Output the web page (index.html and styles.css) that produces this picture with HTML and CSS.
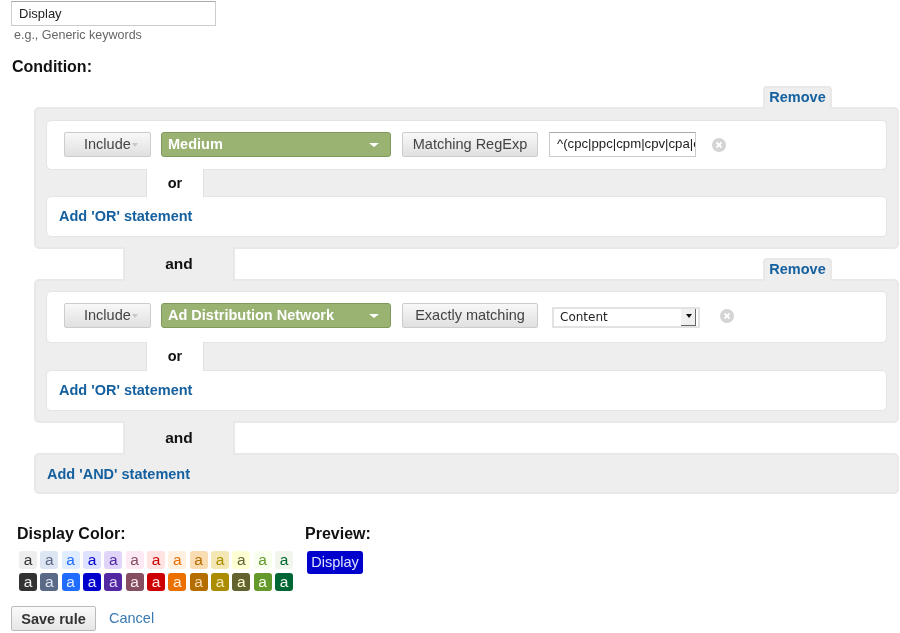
FILE: index.html
```html
<!DOCTYPE html>
<html lang="en">
<head>
<meta charset="utf-8">
<title>Rule</title>
<link rel="stylesheet" href="styles.css">
</head>
<body>
<main class="page">
  <input class="name" type="text" value="Display">
  <p class="hint">e.g., Generic keywords</p>
  <h2 class="condition">Condition:</h2>

  <div class="builder">
    <section class="group">
      <a class="tab">Remove</a>
      <div class="card card-row card-first">
        <button class="btn include">Include<span class="caret"></span></button>
        <div class="dim">Medium<span class="dim-caret"></span></div>
        <button class="btn match">Matching RegExp</button>
        <input class="regexp" type="text" value="^(cpc|ppc|cpm|cpv|cpa|content)$">
        <svg class="close" width="14" height="14" viewBox="0 0 14 14"><circle cx="7" cy="7" r="7" fill="#d4d4d4"/><path d="M4.5 4.5l5 5M9.5 4.5l-5 5" stroke="#fff" stroke-width="1.8"/></svg>
      </div>
      <div class="or"><b>or</b></div>
      <div class="card card-add"><a class="link">Add 'OR' statement</a></div>
    </section>

    <div class="and"><b>and</b></div>

    <section class="group group-second">
      <a class="tab">Remove</a>
      <div class="card card-row card-second">
        <button class="btn include">Include<span class="caret"></span></button>
        <div class="dim">Ad Distribution Network<span class="dim-caret"></span></div>
        <button class="btn match">Exactly matching</button>
        <div class="select">Content<span class="arrow"></span></div>
        <svg class="close close-second" width="14" height="14" viewBox="0 0 14 14"><circle cx="7" cy="7" r="7" fill="#d4d4d4"/><path d="M4.5 4.5l5 5M9.5 4.5l-5 5" stroke="#fff" stroke-width="1.8"/></svg>
      </div>
      <div class="or or-second"><b>or</b></div>
      <div class="card card-add"><a class="link">Add 'OR' statement</a></div>
    </section>

    <div class="and"><b>and</b></div>

    <section class="group group-add"><a class="link">Add 'AND' statement</a></section>
  </div>

  <div class="colors">
    <div class="color-col">
      <h3 class="label">Display Color:</h3>
      <div class="swatches">
        <span class="sw light c1">a</span><span class="sw light c2">a</span><span class="sw light c3">a</span><span class="sw light c4">a</span><span class="sw light c5">a</span><span class="sw light c6">a</span><span class="sw light c7">a</span><span class="sw light c8">a</span><span class="sw light c9">a</span><span class="sw light c10">a</span><span class="sw light c11">a</span><span class="sw light c12">a</span><span class="sw light c13">a</span>
        <span class="sw dark c1">a</span><span class="sw dark c2">a</span><span class="sw dark c3">a</span><span class="sw dark c4">a</span><span class="sw dark c5">a</span><span class="sw dark c6">a</span><span class="sw dark c7">a</span><span class="sw dark c8">a</span><span class="sw dark c9">a</span><span class="sw dark c10">a</span><span class="sw dark c11">a</span><span class="sw dark c12">a</span><span class="sw dark c13">a</span>
      </div>
    </div>
    <div>
      <h3 class="label">Preview:</h3>
      <span class="chip">Display</span>
    </div>
  </div>

  <div class="actions">
    <button class="save">Save rule</button>
    <a class="cancel">Cancel</a>
  </div>
</main>
</body>
</html>
```
FILE: styles.css
```css
* { box-sizing: border-box; }
html, body { margin: 0; padding: 0; background: #fff; }
body {
  font-family: "Liberation Sans", Arial, sans-serif;
  font-size: 14.5px;
  color: #222;
  overflow: hidden;
  height: 633px;
  filter: blur(0.55px);
}
.page { padding: 1px 0 0 11px; width: 900px; }
.name {
  display: block;
  width: 205px;
  height: 25px;
  border: 1px solid #ccc;
  border-top-color: #aaa;
  padding: 0 7px;
  font: 13px "Liberation Sans", sans-serif;
  color: #222;
  background: #fff;
  outline: none;
}
.hint { margin: 2px 0 0 3px; font-size: 12.5px; line-height: 15px; color: #666; }
.condition { margin: 14px 0 0 1px; font-size: 16px; line-height: 19px; color: #111; }

.builder { margin: 31px 0 0 23px; width: 865px; }
.group {
  position: relative;
  background: #eee;
  border: 2px solid #e8e8e8;
  border-radius: 5px;
  padding: 11px 10px 10px;
}
.group-second { padding-top: 10px; }
.tab {
  position: absolute;
  top: -23px;
  right: 65px;
  width: 69px;
  height: 23px;
  background: #eee;
  border: 2px solid #e8e8e8;
  border-bottom: 0;
  border-radius: 4px 4px 0 0;
  text-align: center;
  font-weight: bold;
  font-size: 14.5px;
  line-height: 19px;
  color: #15609f;
}
.card {
  background: #fff;
  border: 1px solid #e4e4e4;
  border-radius: 5px;
}
.card-row { display: flex; align-items: flex-start; padding: 11px 0 0 17px; }
.card-first { height: 50px; }
.card-second { height: 52px; }
.card-add { height: 41px; padding: 10px 0 0 12px; }
.link { font-weight: bold; font-size: 14.5px; line-height: 18px; color: #15609f; }

.or {
  position: relative;
  width: 58px;
  height: 28px;
  margin: -1px 0 -1px 100px;
  background: #fff;
  border-left: 1px solid #e0e0e0;
  border-right: 1px solid #e0e0e0;
  text-align: center;
  line-height: 29px;
  font-size: 14.5px;
  color: #111;
}
.or-second { height: 29px; }
.and {
  position: relative;
  z-index: 1;
  width: 112px;
  height: 34px;
  margin: -2px 0 -2px 89px;
  background: #eee;
  border-left: 2px solid #e8e8e8;
  border-right: 2px solid #e8e8e8;
  text-align: center;
  font-size: 15.5px;
  line-height: 33px;
  color: #111;
}
.group-add { height: 41px; padding: 10px 0 0 11px; }

.btn {
  height: 25px;
  padding: 0 0 2px;
  border: 1px solid #ccc;
  border-radius: 2px;
  background: linear-gradient(#f8f8f8, #e0e0e0);
  font: 14.5px "Liberation Sans", sans-serif;
  color: #444;
  white-space: nowrap;
}
.include { position: relative; width: 87px; padding-left: 19px; text-align: left; }
.caret {
  position: absolute;
  left: 67px;
  top: 10px;
  border: 3.5px solid transparent;
  border-top: 4px solid #c8c8c8;
}
.match { width: 136px; margin-left: 11px; }
.dim {
  position: relative;
  width: 230px;
  height: 25px;
  margin-left: 10px;
  padding-left: 6px;
  background: #9ab373;
  border: 1px solid #7f9a5c;
  border-radius: 3px;
  font-weight: bold;
  font-size: 14.5px;
  line-height: 23px;
  color: #fff;
}
.dim-caret {
  position: absolute;
  right: 11px;
  top: 10px;
  border: 5px solid transparent;
  border-top: 4px solid #fff;
}
.regexp {
  width: 147px;
  height: 25px;
  margin-left: 11px;
  padding: 0 0 2px 7px;
  border: 1px solid #ccc;
  border-top-color: #aaa;
  font: 13.2px "Liberation Sans", sans-serif;
  color: #222;
  outline: none;
}
.close { margin: 6px 0 0 16px; }
.close-second { margin: 6px 0 0 20px; }
.select {
  position: relative;
  width: 148px;
  height: 21px;
  margin: 4px 0 0 14px;
  padding-left: 6px;
  border: 2px solid #e2e2e2;
  background: #fff;
  font: 12px/17px "DejaVu Sans", sans-serif;
  color: #222;
}
.arrow {
  position: absolute;
  right: 2px;
  top: 0;
  width: 15px;
  height: 17px;
  background: #f0f0f0;
  border-right: 1px solid #666;
  border-bottom: 1px solid #666;
}
.arrow::after {
  content: "";
  position: absolute;
  left: 5px;
  top: 5px;
  border: 3px solid transparent;
  border-top: 4px solid #111;
}

.colors { display: flex; margin: 31px 0 0 6px; }
.color-col { width: 288px; }
.label { margin: 0; font-size: 16px; line-height: 18px; color: #111; }
.swatches {
  display: grid;
  grid-template-columns: repeat(13, 18px);
  gap: 4px 3.33px;
  margin: 8px 0 0 2px;
}
.sw {
  height: 18px;
  border-radius: 3px;
  text-align: center;
  font-size: 15.5px;
  line-height: 18px;
}
.sw.light { background: var(--l); color: var(--d); }
.sw.dark { background: var(--d); color: var(--l); }
.c1 { --l: #eeeeee; --d: #333333; }
.c2 { --l: #dee5f2; --d: #5a6986; }
.c3 { --l: #e0ecff; --d: #206cff; }
.c4 { --l: #dfe2ff; --d: #0000cc; }
.c5 { --l: #e0d5f9; --d: #5229a3; }
.c6 { --l: #fde9f4; --d: #854f61; }
.c7 { --l: #ffe3e3; --d: #cc0000; }
.c8 { --l: #fff0e1; --d: #ec7000; }
.c9 { --l: #fadcb3; --d: #b36d00; }
.c10 { --l: #f3e7b3; --d: #ab8b00; }
.c11 { --l: #ffffd4; --d: #636330; }
.c12 { --l: #f9ffef; --d: #64992c; }
.c13 { --l: #f1f5ec; --d: #006633; }
.chip {
  display: block;
  width: 56px;
  height: 23px;
  margin: 8px 0 0 2px;
  background: #0000cc;
  border-radius: 3px;
  color: #dfe2ff;
  text-align: center;
  font-size: 14.5px;
  line-height: 23px;
}

.actions { display: flex; align-items: center; margin-top: 15px; }
.save {
  width: 85px;
  height: 25px;
  padding: 0;
  border: 1px solid #bbb;
  border-radius: 2px;
  background: linear-gradient(#fafafa, #e6e6e6);
  font: bold 14.5px "Liberation Sans", sans-serif;
  color: #333;
}
.cancel { margin: 0 0 2px 13px; font-size: 14.5px; color: #3a7ab0; }
```
